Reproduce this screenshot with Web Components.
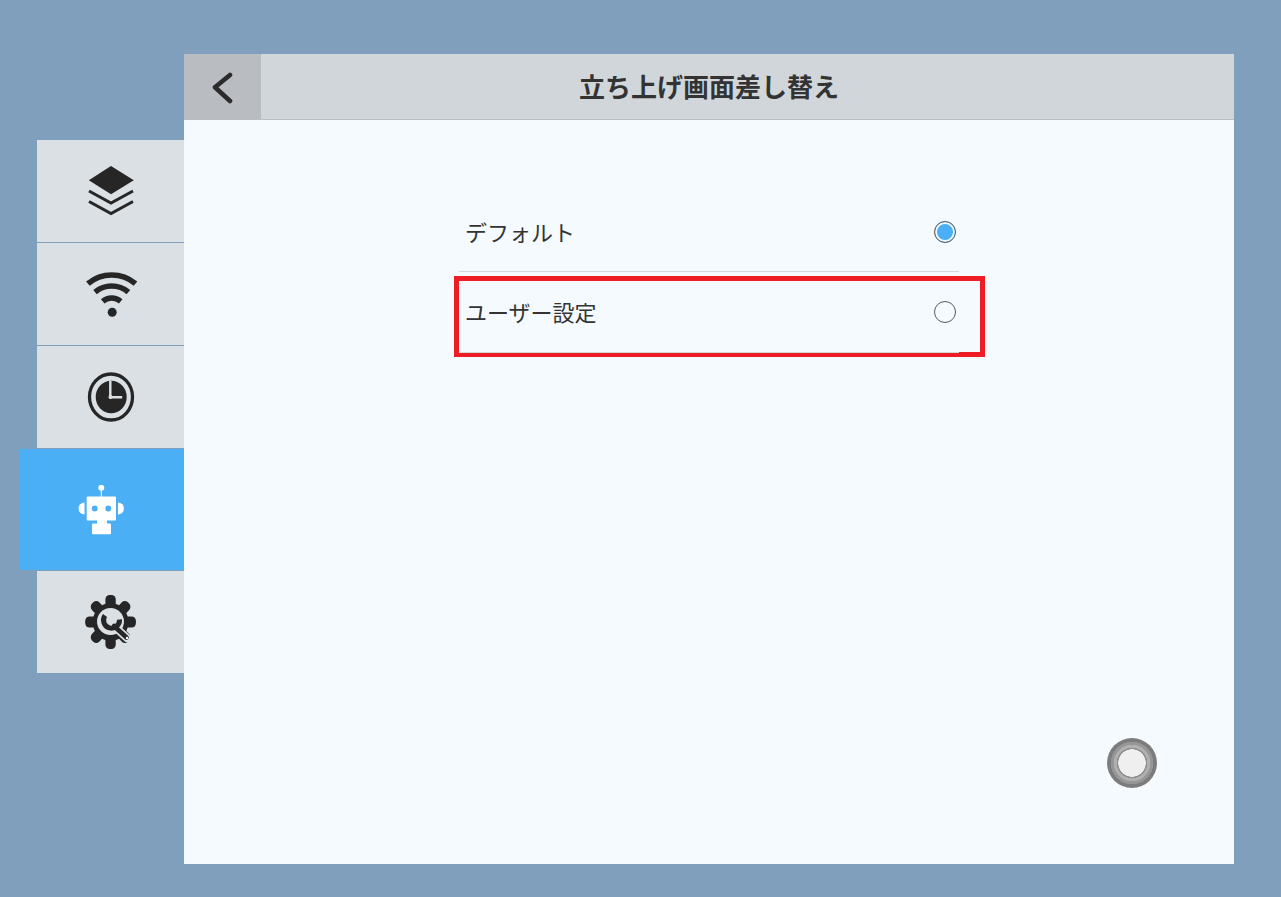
<!DOCTYPE html>
<html lang="ja">
<head>
<meta charset="utf-8">
<title>立ち上げ画面差し替え</title>
<style>
  html, body { margin: 0; height: 100%; }
  body {
    background: #7f9fbd;
    font-family: "Noto Sans CJK JP", "Noto Sans", sans-serif;
    color: #2e2e2e;
  }
</style>
</head>
<body>
<settings-screen>
  <side-tab slot="tabs" icon="layers"></side-tab>
  <side-tab slot="tabs" icon="wifi"></side-tab>
  <side-tab slot="tabs" icon="clock"></side-tab>
  <side-tab slot="tabs" icon="robot" active></side-tab>
  <side-tab slot="tabs" icon="gear"></side-tab>
  <radio-row label="デフォルト" checked></radio-row>
  <radio-row label="ユーザー設定" marked></radio-row>
</settings-screen>

<script>
const ICONS = {
  layers: `<svg width="46" height="50" viewBox="0 0 46 50" fill="none">
    <path d="M23 0 L45.8 14.2 L23 28.3 L0.8 14.2 Z" fill="#262626"/>
    <path d="M1 25 L23 37 L45 25 M1 35.500 L23 47.500 L45 35.500" stroke="#262626" stroke-width="3"/>
  </svg>`,
  wifi: `<svg width="54" height="46" viewBox="0 0 54 46" fill="none" stroke="#262626" stroke-width="5.6">
    <path d="M3.900 12.700 A37 37 0 0 1 51.500 12.700"/>
    <path d="M11 21.100 A26 26 0 0 1 44.400 21.100"/>
    <path d="M18.700 30.300 A14 14 0 0 1 36.700 30.300"/>
    <circle cx="28.200" cy="41.300" r="4.500" fill="#262626" stroke="none"/>
  </svg>`,
  clock: `<svg width="48" height="52" viewBox="0 0 48 52" fill="none">
    <ellipse cx="24" cy="26" rx="21.500" ry="23" stroke="#262626" stroke-width="3.300"/>
    <ellipse cx="24.200" cy="26" rx="15.500" ry="16.200" fill="#262626"/>
    <path d="M23.300 9.700 V26.200 H35.200" stroke="#dbe0e5" stroke-width="2.400"/>
    <circle cx="23.500" cy="26" r="2" fill="#dbe0e5"/>
  </svg>`,
  robot: `<svg width="46" height="50" viewBox="0 0 46 50" fill="#fff">
    <circle cx="23.300" cy="2.800" r="3"/>
    <rect x="22.800" y="4" width="1" height="8"/>
    <rect x="8.700" y="11.500" width="29.300" height="24" rx="1"/>
    <rect x="14" y="38.500" width="19" height="10.700" rx="1"/>
    <rect x="19" y="35" width="10" height="4"/>
    <path d="M6.500 17.500 A6 6 0 0 0 6.500 29.500 Z"/>
    <path d="M40 17.500 A6 6 0 0 1 40 29.500 Z"/>
    <circle cx="16.700" cy="23.500" r="2.900" fill="#4aaff5"/>
    <circle cx="30.300" cy="23.500" r="2.900" fill="#4aaff5"/>
  </svg>`,
  gear: `<svg width="52" height="56" viewBox="0 0 52 56">
    <g fill="#262626" transform="translate(1.600 0) scale(.94 1)">
      <circle cx="25.500" cy="28" r="19"/>
      <rect x="20" y="1" width="11" height="54" rx="4.500"/>
      <rect x="20" y="1" width="11" height="54" rx="4.500" transform="rotate(45 25.500 28)"/>
      <rect x="20" y="1" width="11" height="54" rx="4.500" transform="rotate(90 25.500 28)"/>
      <rect x="20" y="1" width="11" height="54" rx="4.500" transform="rotate(135 25.500 28)"/>
    </g>
    <circle cx="25.500" cy="27.500" r="13.500" fill="#dbe0e5"/>
    <path d="M29 32 L42 44" stroke="#dbe0e5" stroke-width="8" stroke-linecap="round"/>
    <path d="M29 32 L41.500 43.500" stroke="#262626" stroke-width="4.600" stroke-linecap="round"/>
    <path d="M20 21.500 A8 8 0 1 0 34.500 25.500" fill="none" stroke="#262626" stroke-width="5"/>
    <circle cx="42" cy="44" r="1.200" fill="#fff"/>
  </svg>`
};

class SideTab extends HTMLElement {
  constructor() {
    super();
    const root = this.attachShadow({ mode: "open" });
    root.innerHTML = `
      <style>
        :host {
          display: flex;
          align-items: center;
          justify-content: center;
          box-sizing: border-box;
          width: 147px;
          height: 102px;
          margin: 0 0 1px auto;
          background: #dbe0e5;
        }
        :host([active]) {
          width: 165px;
          height: 121px;
          margin-bottom: 1px;
          padding-right: 1px;
          background: #4aaff5;
        }
        svg { display: block; }
      </style>
      ${ICONS[this.getAttribute("icon")]}
    `;
  }
}

class RadioRow extends HTMLElement {
  constructor() {
    super();
    const root = this.attachShadow({ mode: "open" });
    root.innerHTML = `
      <style>
        :host {
          display: flex;
          align-items: center;
          justify-content: space-between;
          box-sizing: border-box;
          position: relative;
          height: 81px;
          padding: 0 3px 1px 6px;
          font-size: 22px;
          color: #333;
        }
        .dot {
          box-sizing: border-box;
          width: 22px;
          height: 22px;
          border-radius: 50%;
          border: 1px solid #555c64;
        }
        :host([checked]) .dot {
          margin-top: 2px;
          background: #4aaff5;
          box-shadow: inset 0 0 0 2px #f5faff;
        }
        :host([marked]) .label { margin-top: -2px; }
        .mark {
          display: none;
          position: absolute;
          left: -5px;
          top: 4px;
          width: 531px;
          height: 81px;
          box-sizing: border-box;
          border: 5px solid #ee1c25;
        }
        :host([marked]) .mark { display: block; }
        .line {
          position: absolute;
          left: 0;
          right: 0;
          bottom: 0;
          height: 1px;
          background: #d6d9dc;
        }
      </style>
      <span class="label">${this.getAttribute("label")}</span>
      <span class="dot"></span>
      <span class="mark"></span>
      <span class="line"></span>
    `;
  }
}

class SettingsScreen extends HTMLElement {
  constructor() {
    super();
    const root = this.attachShadow({ mode: "open" });
    root.innerHTML = `
      <style>
        :host {
          display: flex;
          box-sizing: border-box;
          height: 897px;
          padding: 54px 47px 33px 19px;
        }
        .tabs {
          flex: none;
          width: 165px;
          padding-top: 86px;
        }
        .panel {
          position: relative;
          flex: 1;
          display: flex;
          flex-direction: column;
          background: #f5fafe;
        }
        header {
          display: flex;
          flex: none;
          height: 66px;
          box-sizing: border-box;
          border-bottom: 1px solid #babfc3;
          background: #d0d6d9;
        }
        .back {
          flex: none;
          display: flex;
          align-items: center;
          justify-content: center;
          width: 77px;
          background: #b9bdc1;
        }
        h1 {
          flex: 1;
          margin: 0;
          padding-right: 77px;
          text-align: center;
          font-size: 26px;
          font-weight: 700;
          line-height: 63px;
          color: #333;
        }
        .list {
          width: 500px;
          margin: 71px 0 0 275px;
        }
        .home {
          position: absolute;
          left: 923px;
          top: 684px;
          width: 50px;
          height: 50px;
          border-radius: 50%;
          background: radial-gradient(circle, #efefef 0 13.500px, #8f8f8f 14px 15px, #b0b0b0 15.500px 18px, #969696 18.500px 21px, #7c7c7c 21.500px);
        }
      </style>
      <div class="tabs"><slot name="tabs"></slot></div>
      <section class="panel">
        <header>
          <div class="back">
            <svg width="26" height="34" viewBox="0 0 26 34" fill="none">
              <path d="M20 5 L5 17.200 L20 31" stroke="#2b2b2b" stroke-width="4.600" stroke-linecap="round" stroke-linejoin="round"/>
            </svg>
          </div>
          <h1>立ち上げ画面差し替え</h1>
        </header>
        <div class="list"><slot></slot></div>
        <div class="home"></div>
      </section>
    `;
  }
}

customElements.define("side-tab", SideTab);
customElements.define("radio-row", RadioRow);
customElements.define("settings-screen", SettingsScreen);
</script>
</body>
</html>
